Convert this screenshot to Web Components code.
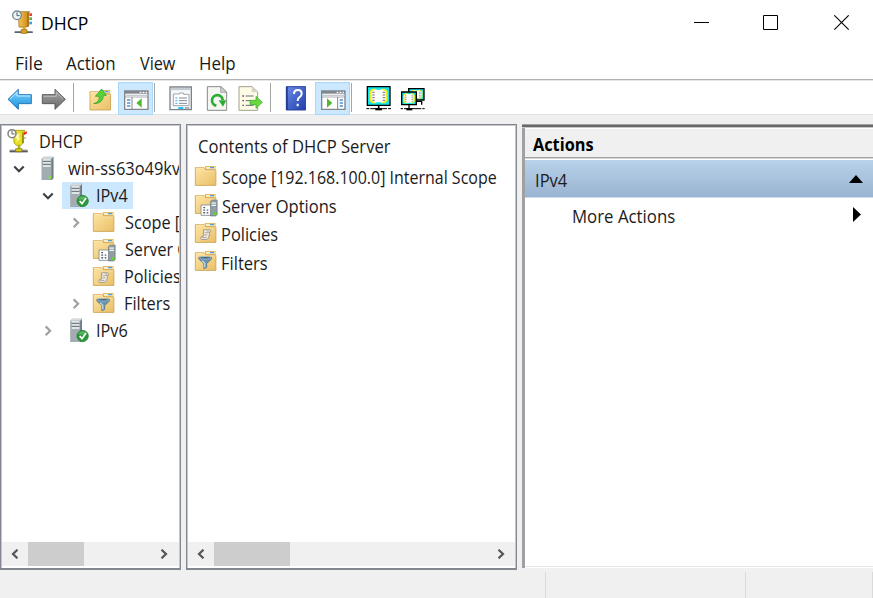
<!DOCTYPE html>
<html lang="en">
<head>
<meta charset="utf-8">
<title>DHCP</title>
<style>
html,body{margin:0;height:100%;overflow:hidden;background:#fff}
body{font-family:"Open Sans","Liberation Sans",sans-serif;color:#1b1b1b}
</style>
</head>
<body>
<dhcp-console></dhcp-console>
<script>
/* Icon artwork is drawn on a grid of three units per pixel. */
const folder = `<path d="M31 1h34v14H31z" fill="#e2b965"/><path d="M35 4h27v6H35z" fill="#fff1bf"/><path d="M47 4h13v4H47z" fill="#4aa0e8"/><path d="M1 6h27l6 8h32v47H1z" fill="url(#fo)" stroke="#c99f4c" stroke-width="2.5"/><path d="M3 8h24l6 8h31" fill="none" stroke="#fff0c0" stroke-width="2"/>`;
const defs = `<defs><linearGradient id="fo" x2="1" y2="1"><stop stop-color="#fee5a4"/><stop offset="1" stop-color="#e9bf67"/></linearGradient><linearGradient id="bl" y2="1" x2="0"><stop stop-color="#84d8fb"/><stop offset="1" stop-color="#158ee0"/></linearGradient><linearGradient id="gy" y2="1" x2="0"><stop stop-color="#aaa"/><stop offset="1" stop-color="#666"/></linearGradient><linearGradient id="sv" x2="1"><stop stop-color="#b9c0c4"/><stop offset="1" stop-color="#7e888e"/></linearGradient><linearGradient id="he" x2="1" y2="1"><stop stop-color="#6a8bea"/><stop offset="1" stop-color="#1f3da8"/></linearGradient><linearGradient id="go" x2="1"><stop stop-color="#f6c550"/><stop offset="1" stop-color="#c78316"/></linearGradient></defs>`;
const server = `<path d="M0 6l5-6h30v64l-3 6H0z" fill="url(#sv)"/><path d="M0 6h30v64H0z" fill="#a2acb1"/><path d="M30 6l5-6v64l-5 6z" fill="#6f7a81"/><path d="M0 6l5-6h30l-5 6z" fill="#d5dade"/><path d="M4 10h23M4 19h23M4 28h23" stroke="#f3f6f7" stroke-width="5"/><path d="M4 14h23M4 23h23" stroke="#4b565e" stroke-width="2"/>`;
const check = `<circle cx="37" cy="52" r="17" fill="#2b9a38" stroke="#177526" stroke-width="2"/><path d="M23 47a15 15 0 0 1 28 0q-13 2-28 0" fill="#6bc074" opacity=".7"/><path d="M28 52l7 8 12-17" fill="none" stroke="#fff" stroke-width="5"/>`;
const clockbook = (a, b, g) => `<path d="M19 4h34l-3 5v39q-10 5-29 2z" fill="${a}" stroke="#91691a" stroke-width="2"/><path d="M46 5l4 3v37l-4 4z" fill="${b}"/><path d="M52 9h8v8h-8z" fill="#ec3b31"/><path d="M52 21h8v8h-8z" fill="#55b24a"/><path d="M52 34h8v8h-8z" fill="#3d9dda"/><circle cx="15" cy="15" r="13" fill="#edf4f8" stroke="#798893" stroke-width="4"/><path d="M15 6v10h8" fill="none" stroke="#4e606c" stroke-width="3"/><path d="M32 49h9v9h-9z" fill="${g}"/><path d="M8 62h54v6H8z" fill="#89949b"/><path d="M8 66h54" stroke="#4e5a61" stroke-width="3"/><path d="M27 58h18v11H27z" fill="${g}" stroke="#8a6610" stroke-width="2"/>`;
/* The tree root shows a brighter, tapering book with only the red tab in colour. */
const rootbook = `<path d="M20 3h34l-5 8v30l-8 7H28l-7-7z" fill="#e6e021" stroke="#8d8512" stroke-width="2"/><path d="M46 8l4 3v28l-5 5z" fill="#8e8610"/><path d="M26 16l12-4-3 12 5 2-12 14 3-12-6-2z" fill="#fdfbb4"/><path d="M51 9l9-3-1 7-8 4z" fill="#f0261d"/><path d="M51 23h6v6h-6z" fill="#c9c9a0"/><circle cx="15" cy="13" r="12" fill="#fff" stroke="#808080" stroke-width="4.5"/><path d="M15 4v10h8" fill="none" stroke="#606060" stroke-width="3"/><path d="M32 48h8v10h-8z" fill="#b8b010"/><path d="M8 61h54v8H8z" fill="#8b8b8b"/><path d="M8 67h54" stroke="#505050" stroke-width="3"/><path d="M26 58h19v9H26z" fill="#d8d20d" stroke="#77700c" stroke-width="2"/>`;
const page = `<path d="M21 32h41l17 16v55H21z" fill="#f5f5f2" stroke="#8b8b8b" stroke-width="3"/><path d="M61 32v17h18z" fill="#cfcfcf" stroke="#8b8b8b" stroke-width="2"/>`;
const panel = (l) => `<path d="M2 33h70v55H2z" fill="#fff" stroke="#81868f" stroke-width="4"/><path d="M2 33h70v8H2z" fill="#81868f"/><path d="M47 37h5M56 37h5M65 37h4" stroke="#fff" stroke-width="4"/><path d="M4 46h66" stroke="#c7cbd1" stroke-width="4"/><path d="M2 51h70" stroke="#81868f" stroke-width="2"/>` + (l
 ? `<path d="M24 51v38" stroke="#81868f" stroke-width="3"/><path d="M9 60h10M9 69h10M9 78h10" stroke="#4d8fd0" stroke-width="4"/><path d="M53 55v28l-16-14z" fill="#4dbb2d"/>`
 : `<path d="M50 51v38" stroke="#81868f" stroke-width="3"/><path d="M56 60h10M56 69h10M56 78h10" stroke="#4d8fd0" stroke-width="4"/><path d="M18 55v28l16-14z" fill="#4dbb2d"/>`);
const screen = (x, y, w, h) => {
  const s = w / 68, t = h / 56;
  return `<path d="M${x} ${y}h${w}v${h}h-${w}z" fill="#10e4ee" stroke="#000" stroke-width="4"/><g transform="translate(${x} ${y}) scale(${s} ${t})"><path d="M7 14l8-8h10l3 4h12l3-4h10l8 8v28l-8 8H43l-3-4H28l-3 4H15l-8-8z" fill="#f6ea20"/><path d="M13 15l8-6h26l8 6v26l-8 6H21l-8-6z" fill="#fff"/><path d="M15 17h7M15 25h7M15 33h7M15 41h7M46 17h7M46 25h7M46 33h7M46 41h7" stroke="#444" stroke-width="2.4"/></g>`;
};
const ICONS = {
 app: [22,25,'0 0 66 75', `<g transform="translate(0 1)">${clockbook('url(#go)','#a56b14','#e2a41f')}</g>`],
 root: [28,27,'0 0 84 81', `<g transform="translate(6 4)">${rootbook}</g>`],
 server: [28,27,'0 0 84 81', `<g transform="translate(26 5)">${server}<circle cx="25" cy="62" r="4" fill="#72ee22"/></g>`],
 ip: [28,27,'0 0 84 81', `<g transform="translate(25 5)">${server}${check}</g>`],
 folder: [28,27,'0 0 84 81', `<g transform="translate(9 8) scale(.95 .97)">${folder}</g>`],
 options: [28,27,'0 0 84 81', `<g transform="translate(9 8) scale(.95 .97)">${folder}<path d="M19 35h33v32H19z" fill="#fff" stroke="#8c969e" stroke-width="3"/><path d="M26 43h6M26 51h6M26 59h6M37 51h5M37 59h5" stroke="#56616a" stroke-width="4"/><path d="M49 24l4-4h17v44l-4 5H49z" fill="#929da4" stroke="#65727b" stroke-width="2"/><path d="M52 29h14M52 36h14" stroke="#f3f7f8" stroke-width="4"/><circle cx="63" cy="62" r="5" fill="#58dc22"/></g>`],
 policies: [28,27,'0 0 84 81', `<g transform="translate(9 8) scale(.95 .97)">${folder}<path d="M27 22h20q5 3 0 8l-4 17q-3 6-8 5H20q-5-5 0-9h6z" fill="#eceae4" stroke="#a59c88" stroke-width="3"/><path d="M30 31h11M28 38h11M22 46h15M41 23v7h6" fill="none" stroke="#a59c88" stroke-width="2.5"/></g>`],
 filters: [28,27,'0 0 84 81', `<g transform="translate(9 8) scale(.95 .97)">${folder}<path d="M12 20h40v6L37 40v12l-9 4V40L12 26z" fill="#6792b1" stroke="#4c6678" stroke-width="2"/><ellipse cx="32" cy="22" rx="19" ry="4" fill="#4b6b82" stroke="#b8d0df" stroke-width="2"/><path d="M22 31l9 8v13" fill="none" stroke="#c4dcea" stroke-width="4"/></g>`],
 back: [26,34,'20 12 78 102', `<path d="M23 70l31-30v16h39v27H54v17z" fill="url(#bl)" stroke="#2a79b8" stroke-width="3"/><path d="M29 69l21-20v11h39" fill="none" stroke="#bceaff" stroke-width="3"/>`],
 forward: [26,34,'124 12 78 102', `<path d="M197 70l-31-30v16h-38v27h38v17z" fill="url(#gy)" stroke="#5b5b5b" stroke-width="3"/><path d="M132 61h38V48l20 20" fill="none" stroke="#bbb" stroke-width="3"/>`],
 up: [24,34,'267 12 72 102', `<g transform="translate(269 41) scale(.95 1)">${folder}</g><path d="M281 83q17-3 17-22h-12l19-22 14 19-9 1q0 23-29 24z" fill="#56d33a" stroke="#2a9a20" stroke-width="2"/>`],
 left: [25,32,'0 9 75 96', panel(true)],
 right: [25,32,'0 9 75 96', panel(false)],
 props: [24,34,'57 12 72 102', `<path d="M60 33h64v68H60z" fill="#f7f8fa" stroke="#7d828b" stroke-width="4"/><path d="M62 39h60" stroke="#c5cbd2" stroke-width="7"/><path d="M70 54h19v-3h12v4h16v34H70z" fill="#fff" stroke="#9ba4af" stroke-width="3"/><path d="M76 66h6M76 74h6M76 82h6" stroke="#33a8d8" stroke-width="3"/><path d="M87 66h24M87 74h24M87 82h24" stroke="#7f8994" stroke-width="3"/><path d="M85 96h15" stroke="#18c5f3" stroke-width="6"/><path d="M105 96h13" stroke="#9ba4af" stroke-width="5"/>`],
 refresh: [22,34,'168 12 66 102', `<g transform="translate(151 0)">${page}</g><path d="M199 89a16 16 0 1 1 19-17" fill="none" stroke="#27ae31" stroke-width="8"/><path d="M206 73h23l-10 19z" fill="#27ae31"/>`],
 export: [26,34,'264 12 78 102', `<path d="M267 32h39l17 16v55h-56z" fill="#fffbe5" stroke="#a29f8c" stroke-width="3"/><path d="M305 32v17h18z" fill="#d9d6c8"/><path d="M277 60h5M277 74h5M277 88h5" stroke="#555" stroke-width="4"/><path d="M287 60h24M287 74h18M287 88h24" stroke="#6d6b83" stroke-width="3"/><path d="M300 73h18V61l19 18-19 18V86h-18z" fill="#69d83e" stroke="#35a528" stroke-width="2"/>`],
 help: [21,34,'-15 12 63 102', `<path d="M-11 32h58v70h-58z" fill="url(#he)" stroke="#2b469d" stroke-width="3"/><path d="M-9 32v70" stroke="#183283" stroke-width="4"/><path d="M12 54q0-12 12-12 11 0 11 11 0 7-7 11-5 3-5 11M23 83v8" fill="none" stroke="#fff" stroke-width="6"/>`],
 screen: [26,34,'226 12 78 102', `${screen(230,32,68,56)}<path d="M264 88v9" stroke="#000" stroke-width="5"/><path d="M227 98h74" stroke="#000" stroke-width="3" stroke-dasharray="9 3 50 3"/><path d="M254 96h20v7h-20z" fill="#000"/>`],
 screens: [26,34,'330 12 78 102', `${screen(356,38,46,34)}${screen(335,48,44,38)}<path d="M357 86v11M379 76h16v10" fill="none" stroke="#000" stroke-width="4"/><path d="M332 98h74" stroke="#000" stroke-width="3" stroke-dasharray="7 3 52 3"/><path d="M349 96h18v7h-18z" fill="#000"/>`],
 min: [16,16,'0 0 16 16', `<path d="M0 7.5h15" stroke="#000"/>`],
 max: [16,16,'0 0 16 16', `<path d="M.5.5h14v14H.5z" fill="none" stroke="#000"/>`],
 close: [16,16,'0 0 16 16', `<path d="M.3.3l14.4 14.4M14.7.3L.3 14.7" stroke="#000" stroke-width="1.1"/>`],
 open: [28,27,'0 0 28 27', `<path d="M9.3 11.5l4.7 4.7 4.7-4.7" fill="none" stroke="#404040" stroke-width="2.2"/>`],
 shut: [28,27,'0 0 28 27', `<path d="M11.7 9.4l4.4 4.4-4.4 4.4" fill="none" stroke="#a0a0a0" stroke-width="2.2"/>`],
 none: [28,27,'0 0 28 27', ''],
 sleft: [8,10,'0 0 8 10', `<path d="M6.5 .7L2 5l4.5 4.3" fill="none" stroke="#555" stroke-width="2.2"/>`],
 sright: [8,10,'0 0 8 10', `<path d="M1.5 .7L6 5 1.5 9.3" fill="none" stroke="#555" stroke-width="2.2"/>`],
 collapse: [14,8,'0 0 14 8', `<path d="M0 8l7-8 7 8z" fill="#000"/>`],
 submenu: [8,15,'0 0 8 15', `<path d="M0 0l8 7.5L0 15z" fill="#000"/>`]
};
const define = (name, html, setup) => customElements.define(name, class extends HTMLElement {
  connectedCallback() {
    if (this.shadowRoot) return;
    const t = document.createElement('template');
    t.innerHTML = typeof html === 'function' ? html(this) : html;
    this.attachShadow({mode: 'open'}).append(t.content.cloneNode(true));
    if (setup) setup(this);
  }
});

define('ui-icon', el => {
  const [w, h, box, art] = ICONS[el.getAttribute('name')];
  return `<style>:host{display:block;flex:none;width:${w}px;height:${h}px}svg{display:block}</style><svg width="${w}" height="${h}" viewBox="${box}">${defs}${art}</svg>`;
});

/* One line of text whose visible glyphs span exactly the w attribute. */
const pen = document.createElement('canvas').getContext('2d');
define('ui-text', `<style>:host{display:block;flex:none;white-space:pre;line-height:24px;font-size:17.3px}span{display:inline-block;transform-origin:0 50%}</style><span></span>`, el => {
  const span = el.shadowRoot.querySelector('span');
  span.textContent = el.getAttribute('label');
  const cs = getComputedStyle(el);
  pen.font = `${cs.fontWeight} ${cs.fontSize} ${cs.fontFamily}`;
  const m = pen.measureText(span.textContent), w = +el.getAttribute('w');
  const k = w / (m.actualBoundingBoxRight + m.actualBoundingBoxLeft);
  span.style.transform = `scaleX(${k})`;
  span.style.marginLeft = `${m.actualBoundingBoxLeft * k}px`;
  el.style.width = `${w}px`;
});

define('title-bar', `<style>:host{display:flex;height:46px;align-items:flex-start;padding-left:12px;box-sizing:border-box;color:#000}
ui-icon.app{margin-top:10px}ui-text{font-size:18.2px;margin:11px 0 0 8px}.c{margin:15px 0 0 auto;display:flex;gap:53px;padding-right:23px}.c ui-icon:last-child{margin-left:2px}</style>
<ui-icon class="app" name="app"></ui-icon><ui-text label="DHCP" w="45.5"></ui-text><div class="c"><ui-icon name="min"></ui-icon><ui-icon name="max"></ui-icon><ui-icon name="close"></ui-icon></div>`);

define('menu-bar', `<style>:host{display:flex;height:33px;padding:6px 0 0 15.5px;gap:24.5px;box-sizing:border-box}</style>
<ui-text label="File" w="26"></ui-text><ui-text label="Action" w="49"></ui-text><ui-text label="View" w="36"></ui-text><ui-text label="Help" w="35"></ui-text>`);

define('tool-toggle', `<style>:host{display:flex;flex:none;box-sizing:border-box;width:35px;height:33px;background:#cce8ff;border:1px solid #a9d8fb;padding-left:5px;align-items:flex-start}</style><slot></slot>`);
define('tool-line', `<style>:host{display:block;flex:none;width:1px;height:29px;margin-top:3px;background:#a5a5a5}</style>`);

define('tool-bar', `<style>:host{display:flex;height:36px;box-sizing:border-box;border-top:1px solid #b2b2b2;border-bottom:1px solid #e2e2e2;background:#fff;box-shadow:inset 0 1px #e6e6e6;align-items:flex-start;padding:0 0 0 7px}
ui-icon,tool-line,tool-toggle{margin-left:var(--g,0)}tool-toggle{margin-top:2px}tool-toggle ui-icon{margin:0}</style>
<ui-icon name="back"></ui-icon><ui-icon name="forward" style="--g:8px"></ui-icon><tool-line style="--g:6px"></tool-line>
<ui-icon name="up" style="--g:15px"></ui-icon><tool-toggle style="--g:5px"><ui-icon name="left"></ui-icon></tool-toggle><tool-line style="--g:1px"></tool-line>
<ui-icon name="props" style="--g:14px"></ui-icon><ui-icon name="refresh" style="--g:13px"></ui-icon><ui-icon name="export" style="--g:10px"></ui-icon><tool-line style="--g:6px"></tool-line>
<ui-icon name="help" style="--g:14px"></ui-icon><tool-toggle style="--g:9px"><ui-icon name="right"></ui-icon></tool-toggle><tool-line style="--g:1px"></tool-line>
<ui-icon name="screen" style="--g:14px"></ui-icon><ui-icon name="screens" style="--g:8px"></ui-icon>`);

define('h-scroll', el => `<style>:host{display:flex;height:24px;background:#f0f0f0;align-items:center;flex:none}.t{width:${el.getAttribute('thumb')}px;height:24px;background:#cdcdcd;margin-left:9px}.l{margin-left:9px}.r{margin:0 ${el.getAttribute('end')}px 0 auto}ui-icon{margin-top:-1px}</style>
<ui-icon class="l" name="sleft"></ui-icon><div class="t"></div><ui-icon class="r" name="sright"></ui-icon>`);

define('list-pane', `<style>:host{display:flex;flex-direction:column;flex:none;box-sizing:border-box;border:1px solid #828790;border-bottom-width:2px;box-shadow:inset 1px 0 #c4c6ca,inset -1px 0 #c4c6ca,inset 0 1px #c4c6ca;background:#fff;padding:0 1px 2px 1px}.b{flex:1;overflow:hidden;min-height:0}</style><div class="b"><slot></slot></div><slot name="scroll"></slot>`);

define('tree-row', el => `<style>:host{display:flex;height:27px;align-items:center;padding-left:${el.getAttribute('x')}px}.s{display:flex;align-items:center;height:27px;padding-right:5.5px}:host([on]) .s{background:#cce8ff}ui-text{margin:2px 0 0 ${el.getAttribute('gap')}px}</style>
${el.hasAttribute('arrow') ? `<ui-icon name="${el.getAttribute('arrow')}"></ui-icon>` : ''}<div class="s"><ui-icon name="${el.getAttribute('icon')}"></ui-icon><ui-text label="${el.getAttribute('label')}" w="${el.getAttribute('w')}"></ui-text></div>`);

define('list-row', el => `<style>:host{display:flex;height:28.5px;align-items:center;padding-left:4px}ui-icon{margin-top:-1px}ui-text{margin:3px 0 0 2px}</style><ui-icon name="${el.getAttribute('icon')}"></ui-icon><ui-text label="${el.getAttribute('label')}" w="${el.getAttribute('w')}"></ui-text>`);

define('actions-pane', `<style>:host{display:flex;flex-direction:column;flex:1;height:444px;box-sizing:border-box;border-left:3px solid #777;border-image:linear-gradient(90deg,#a0a0a0 34%,#696969 34%) 3;border-top:0;background:#fff}
.e{height:4px;margin-left:-3px;background:linear-gradient(#a0a0a0 25%,#696969 25% 75%,#c8c8c8 75%);flex:none}
.h{display:flex;height:29px;margin-top:1px;background:#f0f0f0;border-bottom:1px solid #a0a0a0;box-shadow:0 1px #d5d5d5;box-sizing:border-box;padding:4px 0 0 8px}
.h ui-text{font-weight:700;color:#000}
.g{display:flex;height:37px;margin-top:2px;align-items:center;justify-content:space-between;background:linear-gradient(#b9d1ea,#99b4d1);border-bottom:1px solid #ccdcec;padding:0 10px 0 11px}.g ui-text{margin-top:4px}
.m{display:flex;height:38px;align-items:center;justify-content:space-between;padding:0 12px 0 47.5px}.m ui-icon{margin-top:-5px}.m ui-text{margin-top:-1px}
.f{margin-top:auto;height:1px;background:#e3e3e3;margin-bottom:1px}</style>
<div class="e"></div><div class="h"><ui-text label="Actions" w="60"></ui-text></div>
<div class="g"><ui-text label="IPv4" w="31.5"></ui-text><ui-icon name="collapse"></ui-icon></div>
<div class="m"><ui-text label="More Actions" w="102"></ui-text><ui-icon name="submenu"></ui-icon></div><div class="f"></div>`);

define('status-bar', `<style>:host{display:flex;height:27px;margin-top:2px;border-top:0}div{box-sizing:border-box;border-right:1px solid #dadada;flex:none}div:nth-of-type(1){width:546px}div:nth-of-type(2){width:200px}div:nth-of-type(3){width:127px}</style><div></div><div></div><div></div>`);

define('dhcp-console', `<style>:host{display:flex;flex-direction:column;width:873px;height:598px;overflow:hidden;background:#fff}
main{display:flex;height:483px;flex-direction:column;background:#f0f0f0}
.p{display:flex;height:446px;padding-top:9px;align-items:flex-start}
.tree{width:181px;height:446px}.list{width:331px;height:446px;margin:0 5px}
.cap{display:flex;height:37.5px;padding:10px 0 0 10.5px;box-sizing:border-box}.trees{padding-top:2.5px}</style>
<title-bar></title-bar><menu-bar></menu-bar><tool-bar></tool-bar>
<main><div class="p">
<list-pane class="tree"><div class="trees">
<tree-row x="3" icon="root" gap="6.5" label="DHCP" w="42.5"></tree-row>
<tree-row x="3" arrow="open" icon="server" gap="6.5" label="win-ss63o49kv" w="112.5"></tree-row>
<tree-row x="31.5" arrow="open" icon="ip" gap="7" label="IPv4" w="31" on></tree-row>
<tree-row x="60" arrow="shut" icon="folder" gap="7" label="Scope [" w="55.5"></tree-row>
<tree-row x="60" arrow="none" icon="options" gap="7" label="Server O" w="64.5"></tree-row>
<tree-row x="60" arrow="none" icon="policies" gap="7" label="Policies" w="55.5"></tree-row>
<tree-row x="60" arrow="shut" icon="filters" gap="7" label="Filters" w="45"></tree-row>
<tree-row x="31.5" arrow="shut" icon="ip" gap="7" label="IPv6" w="31"></tree-row>
</div><h-scroll slot="scroll" thumb="56" end="11"></h-scroll></list-pane>
<list-pane class="list"><div class="cap"><ui-text label="Contents of DHCP Server" w="191.5"></ui-text></div>
<list-row icon="folder" label="Scope [192.168.100.0] Internal Scope" w="274"></list-row>
<list-row icon="options" label="Server Options" w="114.5"></list-row>
<list-row icon="policies" label="Policies" w="56"></list-row>
<list-row icon="filters" label="Filters" w="45.5"></list-row>
<h-scroll slot="scroll" thumb="76" end="10"></h-scroll></list-pane>
<actions-pane></actions-pane></div><status-bar></status-bar></main>`);
</script>
</body>
</html>
